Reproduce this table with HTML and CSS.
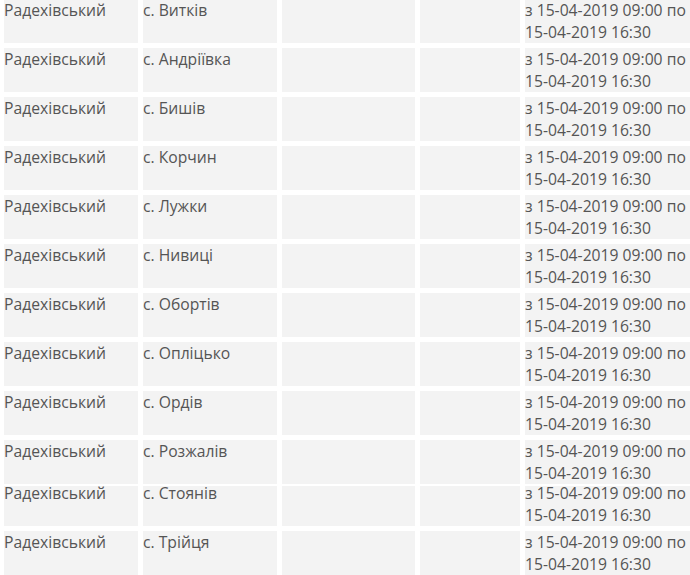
FILE: index.html
```html
<!DOCTYPE html>
<html lang="uk">
<head>
<meta charset="utf-8">
<title>Відключення</title>
<link rel="stylesheet" href="styles.css">
</head>
<body>
<div class="table">
  <div class="row"><div class="cell">Радехівський</div><div class="cell">с. Витків</div><div class="cell"></div><div class="cell"></div><div class="cell">з 15-04-2019 09:00 по 15-04-2019 16:30</div></div>
  <div class="row"><div class="cell">Радехівський</div><div class="cell">с. Андріївка</div><div class="cell"></div><div class="cell"></div><div class="cell">з 15-04-2019 09:00 по 15-04-2019 16:30</div></div>
  <div class="row"><div class="cell">Радехівський</div><div class="cell">с. Бишів</div><div class="cell"></div><div class="cell"></div><div class="cell">з 15-04-2019 09:00 по 15-04-2019 16:30</div></div>
  <div class="row"><div class="cell">Радехівський</div><div class="cell">с. Корчин</div><div class="cell"></div><div class="cell"></div><div class="cell">з 15-04-2019 09:00 по 15-04-2019 16:30</div></div>
  <div class="row"><div class="cell">Радехівський</div><div class="cell">с. Лужки</div><div class="cell"></div><div class="cell"></div><div class="cell">з 15-04-2019 09:00 по 15-04-2019 16:30</div></div>
  <div class="row"><div class="cell">Радехівський</div><div class="cell">с. Нивиці</div><div class="cell"></div><div class="cell"></div><div class="cell">з 15-04-2019 09:00 по 15-04-2019 16:30</div></div>
  <div class="row"><div class="cell">Радехівський</div><div class="cell">с. Обортів</div><div class="cell"></div><div class="cell"></div><div class="cell">з 15-04-2019 09:00 по 15-04-2019 16:30</div></div>
  <div class="row"><div class="cell">Радехівський</div><div class="cell">с. Опліцько</div><div class="cell"></div><div class="cell"></div><div class="cell">з 15-04-2019 09:00 по 15-04-2019 16:30</div></div>
  <div class="row"><div class="cell">Радехівський</div><div class="cell">с. Ордів</div><div class="cell"></div><div class="cell"></div><div class="cell">з 15-04-2019 09:00 по 15-04-2019 16:30</div></div>
  <div class="row"><div class="cell">Радехівський</div><div class="cell">с. Розжалів</div><div class="cell"></div><div class="cell"></div><div class="cell">з 15-04-2019 09:00 по 15-04-2019 16:30</div></div>
  <div class="row row-short"><div class="cell">Радехівський</div><div class="cell">с. Стоянів</div><div class="cell"></div><div class="cell"></div><div class="cell">з 15-04-2019 09:00 по 15-04-2019 16:30</div></div>
  <div class="row"><div class="cell">Радехівський</div><div class="cell">с. Трійця</div><div class="cell"></div><div class="cell"></div><div class="cell">з 15-04-2019 09:00 по 15-04-2019 16:30</div></div>
</div>
</body>
</html>
```

FILE: styles.css
```css
html, body {
  margin: 0;
  padding: 0;
  background: #ffffff;
  overflow: hidden;
}

body {
  font-family: "Open Sans", "Noto Sans", sans-serif;
  font-size: 15.7px;
  line-height: 22px;
  color: #555555;
}

.table {
  display: flex;
  flex-direction: column;
  gap: 5px;
  margin-top: -1px;
  padding-left: 4px;
}

.row {
  display: grid;
  grid-template-columns: 134px 134px 133px 100px 170px;
  column-gap: 5px;
  height: 44px;
}

.cell {
  background: #f3f3f3;
  overflow: visible;
}

.row-short {
  height: 40px;
  margin-top: -3px;
}

.row-short .cell::before {
  content: "";
  display: block;
  margin-top: -4px;
}
```
